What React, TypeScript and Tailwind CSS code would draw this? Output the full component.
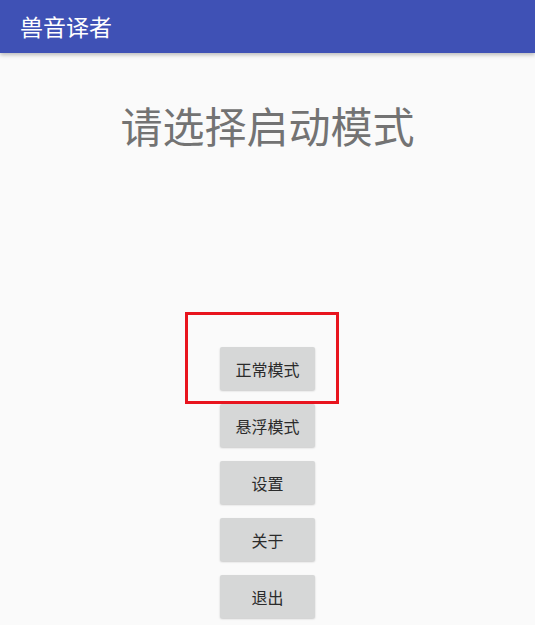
import React from 'react';

const modes = ['正常模式', '悬浮模式', '设置', '关于', '退出'];

const font = { fontFamily: '"Noto Sans CJK SC", "Noto Sans", Roboto, sans-serif' };

export default function App() {
  return (
    <div className="w-[535px] h-[625px] bg-[#fafafa] overflow-hidden" style={font}>
      <header className="relative z-10 h-[53px] bg-[#3f51b5] flex items-center px-5 shadow-[0_2px_4px_rgba(0,0,0,0.25)]">
        <h1 className="text-[23px] leading-none text-white">兽音译者</h1>
      </header>
      <main className="flex flex-col items-center">
        <h2 className="mt-[51px] text-[42px] leading-none text-[#737373]">请选择启动模式</h2>
        <div className="mt-[201px] flex flex-col items-center gap-[14px]">
          {modes.map((m, i) => (
            <div key={m} className="relative">
              <button className="w-[95px] h-[43px] rounded-[2px] bg-[#d6d7d7] text-[16px] text-[#2b2b2b] shadow-[0_1px_2px_rgba(0,0,0,0.2)]">
                {m}
              </button>
              {i === 0 && (
                <div className="absolute left-[-35px] top-[-35px] w-[154px] h-[92px] border-[3px] border-[#e8141e] pointer-events-none" />
              )}
            </div>
          ))}
        </div>
      </main>
    </div>
  );
}
